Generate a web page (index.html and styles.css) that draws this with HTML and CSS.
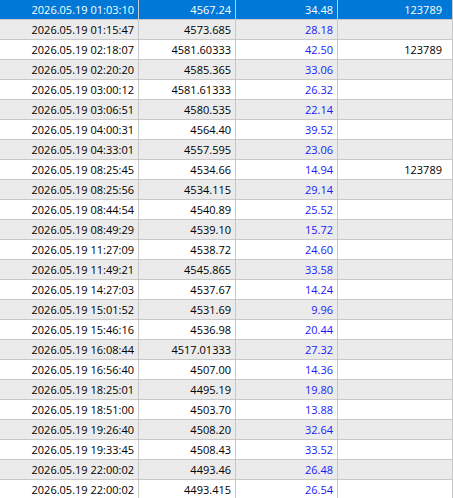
FILE: index.html
```html
<!DOCTYPE html>
<html>
<head>
<meta charset="utf-8">
<link rel="stylesheet" href="styles.css">
</head>
<body>
<table class="grid">
<colgroup><col class="c1"><col class="c2"><col class="c3"><col class="c4"></colgroup>
<tbody>
<tr class="sel"><td>2026.05.19 01:03:10</td><td>4567.24</td><td class="v">34.48</td><td>123789</td></tr>
<tr><td>2026.05.19 01:15:47</td><td>4573.685</td><td class="v">28.18</td><td></td></tr>
<tr><td>2026.05.19 02:18:07</td><td>4581.60333</td><td class="v">42.50</td><td>123789</td></tr>
<tr><td>2026.05.19 02:20:20</td><td>4585.365</td><td class="v">33.06</td><td></td></tr>
<tr><td>2026.05.19 03:00:12</td><td>4581.61333</td><td class="v">26.32</td><td></td></tr>
<tr><td>2026.05.19 03:06:51</td><td>4580.535</td><td class="v">22.14</td><td></td></tr>
<tr><td>2026.05.19 04:00:31</td><td>4564.40</td><td class="v">39.52</td><td></td></tr>
<tr><td>2026.05.19 04:33:01</td><td>4557.595</td><td class="v">23.06</td><td></td></tr>
<tr><td>2026.05.19 08:25:45</td><td>4534.66</td><td class="v">14.94</td><td>123789</td></tr>
<tr><td>2026.05.19 08:25:56</td><td>4534.115</td><td class="v">29.14</td><td></td></tr>
<tr><td>2026.05.19 08:44:54</td><td>4540.89</td><td class="v">25.52</td><td></td></tr>
<tr><td>2026.05.19 08:49:29</td><td>4539.10</td><td class="v">15.72</td><td></td></tr>
<tr><td>2026.05.19 11:27:09</td><td>4538.72</td><td class="v">24.60</td><td></td></tr>
<tr><td>2026.05.19 11:49:21</td><td>4545.865</td><td class="v">33.58</td><td></td></tr>
<tr><td>2026.05.19 14:27:03</td><td>4537.67</td><td class="v">14.24</td><td></td></tr>
<tr><td>2026.05.19 15:01:52</td><td>4531.69</td><td class="v">9.96</td><td></td></tr>
<tr><td>2026.05.19 15:46:16</td><td>4536.98</td><td class="v">20.44</td><td></td></tr>
<tr><td>2026.05.19 16:08:44</td><td>4517.01333</td><td class="v">27.32</td><td></td></tr>
<tr><td>2026.05.19 16:56:40</td><td>4507.00</td><td class="v">14.36</td><td></td></tr>
<tr><td>2026.05.19 18:25:01</td><td>4495.19</td><td class="v">19.80</td><td></td></tr>
<tr><td>2026.05.19 18:51:00</td><td>4503.70</td><td class="v">13.88</td><td></td></tr>
<tr><td>2026.05.19 19:26:40</td><td>4508.20</td><td class="v">32.64</td><td></td></tr>
<tr><td>2026.05.19 19:33:45</td><td>4508.43</td><td class="v">33.52</td><td></td></tr>
<tr><td>2026.05.19 22:00:02</td><td>4493.46</td><td class="v">26.48</td><td></td></tr>
<tr><td>2026.05.19 22:00:02</td><td>4493.415</td><td class="v">26.54</td><td></td></tr>
</tbody>
</table>
</body>
</html>
```
FILE: styles.css
```css
html, body {
  margin: 0;
  padding: 0;
  background: #ffffff;
}
.grid {
  border-collapse: separate;
  border-spacing: 0;
  table-layout: fixed;
  width: 453px;
  font-family: "Open Sans", "Noto Sans", sans-serif;
  font-size: 11px;
  color: #000000;
}
.c1 { width: 139px; }
.c2 { width: 97px; }
.c3 { width: 102px; }
.c4 { width: 115px; }
.grid td {
  height: 19px;
  padding: 0 4px 0 0;
  border-right: 1px solid #c8c8c8;
  border-bottom: 1px solid #c8c8c8;
  text-align: right;
  white-space: nowrap;
  overflow: hidden;
  line-height: 19px;
}
.grid tr:nth-child(even) td { background: #ebebeb; }
.grid td.v { color: #1a1aff; }
.grid tr.sel td { background: #0078d7; color: #ffffff; }
.grid td:last-child { padding-right: 10px; }
```
